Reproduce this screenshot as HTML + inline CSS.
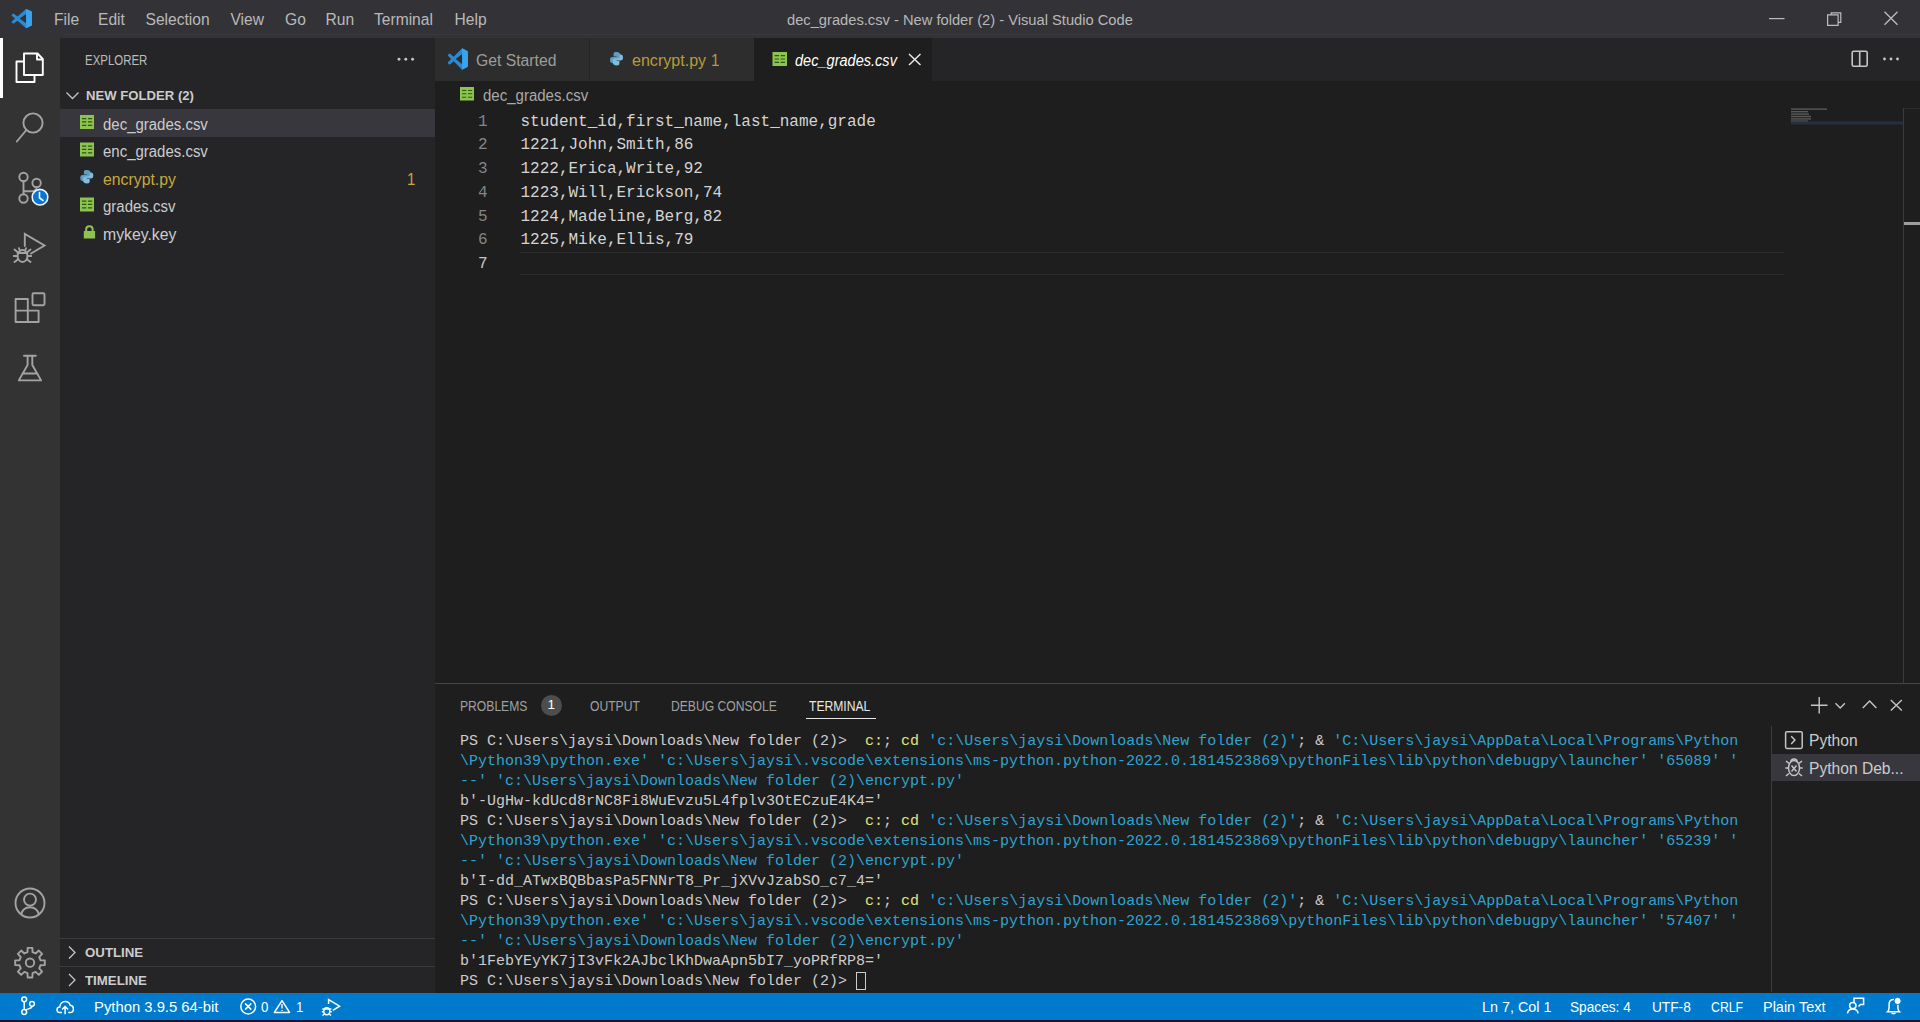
<!DOCTYPE html>
<html><head><meta charset="utf-8">
<style>
*{margin:0;padding:0;box-sizing:border-box}
html,body{width:1920px;height:1022px;overflow:hidden;background:#1e1e1e;font-family:"Liberation Sans",sans-serif;color:#ccc}
.a{position:absolute;white-space:nowrap}
#title{left:0;top:0;width:1920px;height:38px;background:#333337}
#act{left:0;top:38px;width:60px;height:955px;background:#333333}
#side{left:60px;top:38px;width:375px;height:955px;background:#252528}
#tabs{left:435px;top:38px;width:1485px;height:43px;background:#252528}
#editor{left:435px;top:81px;width:1485px;height:602px;background:#1e1e1e}
#panel{left:435px;top:683px;width:1485px;height:310px;background:#1e1e1e;border-top:1px solid #454545}
#status{left:0;top:992.5px;width:1920px;height:27.5px;background:#007acc}
#bottomstrip{left:0;top:1020px;width:1920px;height:2px;background:#1d1030}
.menu{top:11px;font-size:15.6px;line-height:18px;color:#b9b9b9}
.flist{font-size:15.6px;line-height:18px;color:#cccccc;transform:scaleX(0.96);transform-origin:0 0}
.tabt{font-size:15.6px;line-height:18px;transform:scaleX(0.97);transform-origin:0 0}
.ptab{top:697.5px !important;font-size:14.2px;line-height:16px;color:#a0a0a0;transform:scaleX(0.855);transform-origin:0 0}
.sbt{top:998.5px;font-size:14.4px;line-height:17px;color:#ffffff;transform:scaleX(0.92);transform-origin:0 0}
.mono{font-family:"Liberation Mono",monospace}
svg{position:absolute;overflow:visible}
</style></head><body>
<div id="title" class="a"></div>
<div id="act" class="a"></div>
<div id="side" class="a"></div>
<div id="tabs" class="a"></div>
<div id="editor" class="a"></div>
<div id="panel" class="a"></div>
<div id="status" class="a"></div>
<div id="bottomstrip" class="a"></div>
<div class="a" style="left:64px;top:33.5px;width:1856px;height:1.5px;background:#38383d"></div>

<!-- TITLE BAR -->
<svg style="left:0;top:0" width="40" height="38"><g transform="translate(11.4 8.5) scale(0.207 0.202)"><path d="M70.9 2.1 L96 14.2 C97.8 15 99 16.9 99 18.9 V81.1 C99 83.1 97.8 85 96 85.8 L70.9 97.9 L29.6 60.3 L11.7 74 C10.5 74.9 8.9 74.9 7.7 74 L1.9 68.8 C0.6 67.5 0.6 65.5 1.9 64.2 L17.4 50 L1.9 35.8 C0.6 34.5 0.6 32.5 1.9 31.2 L7.7 26 C8.9 25.1 10.5 25.1 11.7 26 L29.6 39.7 Z M70.9 27.2 L39.6 50 L70.9 72.8 Z" fill="#2a8ad4" fill-rule="evenodd"/><path d="M70.9 2.1 L96 14.2 C97.8 15 99 16.9 99 18.9 V81.1 C99 83.1 97.8 85 96 85.8 L70.9 97.9 Z" fill="#3aa3ee"/></g></svg>
<div class="a menu" style="left:54px">File</div>
<div class="a menu" style="left:98px">Edit</div>
<div class="a menu" style="left:145.5px">Selection</div>
<div class="a menu" style="left:230.5px">View</div>
<div class="a menu" style="left:285px">Go</div>
<div class="a menu" style="left:325.5px">Run</div>
<div class="a menu" style="left:374px">Terminal</div>
<div class="a menu" style="left:454.5px">Help</div>
<div class="a menu" style="left:787px;font-size:14.7px;top:11px;color:#b8b8b8">dec_grades.csv - New folder (2) - Visual Studio Code</div>
<svg style="left:1768.5px;top:18px" width="16" height="2"><rect x="0" y="0" width="15.5" height="1.2" fill="#bdbdbd"/></svg>
<svg style="left:1826px;top:10px" width="18" height="18" viewBox="0 0 18 18"><path d="M1.6 4.8 H12.1 V15.3 H1.6 Z M5.2 4.8 V2.8 H14.8 V12.4 H12.1" fill="none" stroke="#bdbdbd" stroke-width="1.2"/></svg>
<svg style="left:1883px;top:10px" width="18" height="18" viewBox="0 0 18 18"><path d="M1.5 1.8 L14.5 14.8 M14.5 1.8 L1.5 14.8" stroke="#bdbdbd" stroke-width="1.3"/></svg>


<!-- ACTIVITY BAR -->
<div class="a" style="left:0;top:38px;width:2.5px;height:60px;background:#ffffff"></div>
<svg style="left:0;top:38px" width="60" height="360" viewBox="0 38 60 360">
 <g fill="none" stroke="#ffffff" stroke-width="1.9" stroke-linejoin="round">
  <path d="M24 61.5 H16.5 V82 H34.5 V75"/>
  <path d="M24 75 V53.5 H37.5 L42.8 59 V75 Z"/>
  <path d="M37 53.5 V59.5 H42.8"/>
 </g>
 <g fill="none" stroke="#a3a3a3" stroke-width="1.9" stroke-linecap="round">
  <circle cx="33" cy="123" r="9.6"/>
  <path d="M26 130.5 L16.8 141.5"/>
  <circle cx="23.5" cy="177" r="4.2"/>
  <circle cx="36.6" cy="183" r="4.2"/>
  <circle cx="23.5" cy="198.5" r="4.2"/>
  <path d="M23.5 181.2 V194.3 M23.5 191.3 H31 C34.5 191.3 36.6 190 36.6 187.2"/>
  <path d="M24.8 246 V234 L44.5 245.5 L31 253.5"/>
  <ellipse cx="22.5" cy="256" rx="5" ry="6"/>
  <path d="M17.5 253 H27.5 M14.5 249.5 L17.5 252 M30.5 249.5 L27.5 252 M13.8 256 H17.5 M27.5 256 H31.2 M14.5 262 L17.8 259.5 M30.5 262 L27.2 259.5 M19.8 250.5 L19 248.2 M25.2 250.5 L26 248.2"/>
  <path d="M15.6 299 H27.8 V322 H15.6 Z M15.6 310.6 H38.6 V322 H27.8" stroke-linejoin="round"/>
  <rect x="32.5" y="293.2" width="12" height="12" rx="1.2"/>
  <path d="M24 355.7 H35.8 M27.6 355.7 V365 L18.8 380.4 H41.1 L32.3 365 V355.7 M22.5 373.5 H37.5" stroke-linejoin="round"/>
 </g>
 <circle cx="40" cy="197.2" r="7.8" fill="#0a74d2" stroke="#e6f6ff" stroke-width="1.6"/>
 <path d="M39.5 192.5 V197.8 L43 200.5" fill="none" stroke="#ffffff" stroke-width="1.6" stroke-linecap="round"/>
</svg>
<svg style="left:0;top:880px" width="60" height="110" viewBox="0 880 60 110">
 <g fill="none" stroke="#a3a3a3" stroke-width="1.9">
  <circle cx="30" cy="903" r="14.5"/>
  <circle cx="30" cy="899.6" r="6"/>
  <path d="M21.2 914.2 C22.5 909.5 26 907.2 30 907.2 C34 907.2 37.5 909.5 38.8 914.2"/>
  <path d="M44.82 960.35 L44.82 965.05 L40.50 965.22 L39.21 968.34 L42.14 971.52 L38.82 974.84 L35.64 971.91 L32.52 973.20 L32.35 977.52 L27.65 977.52 L27.48 973.20 L24.36 971.91 L21.18 974.84 L17.86 971.52 L20.79 968.34 L19.50 965.22 L15.18 965.05 L15.18 960.35 L19.50 960.18 L20.79 957.06 L17.86 953.88 L21.18 950.56 L24.36 953.49 L27.48 952.20 L27.65 947.88 L32.35 947.88 L32.52 952.20 L35.64 953.49 L38.82 950.56 L42.14 953.88 L39.21 957.06 L40.50 960.18 Z" stroke-linejoin="round"/>
  <circle cx="30" cy="962.7" r="4.2"/>
 </g>
</svg>


<!-- SIDEBAR -->
<div class="a" style="left:85px;top:52px;font-size:14px;line-height:16px;color:#bbbbbb;transform:scaleX(0.817);transform-origin:0 0">EXPLORER</div>
<svg style="left:396px;top:57px" width="22" height="5"><circle cx="3" cy="2.2" r="1.45" fill="#c5c5c5"/><circle cx="9.8" cy="2.2" r="1.45" fill="#c5c5c5"/><circle cx="16.6" cy="2.2" r="1.45" fill="#c5c5c5"/></svg>
<svg style="left:60px;top:81px" width="30" height="28"><path d="M6.5 11.5 L12.5 17.5 L18.5 11.5" fill="none" stroke="#c5c5c5" stroke-width="1.3"/></svg>
<div class="a" style="left:85.5px;top:88px;font-size:13px;line-height:16px;font-weight:bold;color:#cccccc;transform:scaleX(1.01);transform-origin:0 0">NEW FOLDER (2)</div>
<div class="a" style="left:60px;top:109px;width:375px;height:27.5px;background:#37373d"></div>
<div class="a flist" style="left:102.5px;top:115.5px">dec_grades.csv</div>
<div class="a flist" style="left:102.5px;top:143.0px">enc_grades.csv</div>
<div class="a flist" style="left:102.5px;top:170.5px;color:#c9a83a;transform:scaleX(1.013)">encrypt.py</div>
<div class="a flist" style="left:407px;top:170.5px;color:#c9a83a">1</div>
<div class="a flist" style="left:102.5px;top:198.0px">grades.csv</div>
<div class="a flist" style="left:102.5px;top:225.5px;transform:scaleX(1.013)">mykey.key</div>
<svg style="left:0;top:0" width="100" height="250">
 <g id="csvicon"><rect x="80" y="115" width="14" height="14" fill="#8dc34f"/>
 <path d="M82 118.6 H86.4 M88 118.6 H92.2 M82 121.9 H86.4 M88 121.9 H92.2 M82 125.4 H86.4 M88 125.4 H92.2" stroke="#2a5a12" stroke-width="1.1"/></g>
 <use href="#csvicon" y="27.5"/>
 <use href="#csvicon" y="82.5"/>
 <g transform="translate(80.3 170)">
  <path d="M6.3 0 C3.5 0 3.6 1.2 3.6 2.6 V4.4 H6.5 V5 H2.2 C0.8 5 0 6.1 0 8 C0 9.9 0.9 10.9 2.2 10.9 H3.3 V9.2 C3.3 7.9 4.3 7 5.5 7 H8.4 C9.4 7 10.2 6.2 10.2 5.2 V2.6 C10.2 1.2 9.1 0 6.3 0 Z" fill="#5a9fc6"/>
  <path d="M6.7 13.4 C9.5 13.4 9.4 12.2 9.4 10.8 V9 H6.5 V8.4 H10.8 C12.2 8.4 13 7.3 13 5.4 C13 3.5 12.1 2.5 10.8 2.5 H9.7 V4.2 C9.7 5.5 8.7 6.4 7.5 6.4 H4.6 C3.6 6.4 2.8 7.2 2.8 8.2 V10.8 C2.8 12.2 3.9 13.4 6.7 13.4 Z" fill="#82bcdc"/>
 </g>
 <path d="M86.2 231.5 V229 C86.2 227.3 87.6 226.2 89.4 226.2 C91.2 226.2 92.6 227.3 92.6 229 V231.5" fill="none" stroke="#8dc34f" stroke-width="2"/>
 <rect x="83.8" y="231" width="11.3" height="7.5" fill="#8dc34f"/>
</svg>
<div class="a" style="left:60px;top:938px;width:375px;height:1px;background:#3c3c3e"></div>
<div class="a" style="left:60px;top:965.5px;width:375px;height:1px;background:#3c3c3e"></div>
<svg style="left:60px;top:939px" width="30" height="54"><path d="M9 7.5 L15 13.5 L9 19.5 M9 35 L15 41 L9 47" fill="none" stroke="#c5c5c5" stroke-width="1.3"/></svg>
<div class="a" style="left:85px;top:945px;font-size:13px;line-height:16px;font-weight:bold;color:#cccccc;transform:scaleX(1.02);transform-origin:0 0">OUTLINE</div>
<div class="a" style="left:85px;top:972.5px;font-size:13px;line-height:16px;font-weight:bold;color:#cccccc;transform:scaleX(1.02);transform-origin:0 0">TIMELINE</div>


<!-- EDITOR TABS -->
<div class="a" style="left:435px;top:38px;width:154px;height:43px;background:#2d2d2d"></div>
<div class="a" style="left:590px;top:38px;width:164px;height:43px;background:#2d2d2d"></div>
<div class="a" style="left:754px;top:38px;width:177.5px;height:43px;background:#1e1e1e"></div>
<svg style="left:0;top:0" width="480" height="80"><g transform="translate(447.6 47.8) scale(0.205 0.225)"><path d="M70.9 2.1 L96 14.2 C97.8 15 99 16.9 99 18.9 V81.1 C99 83.1 97.8 85 96 85.8 L70.9 97.9 L29.6 60.3 L11.7 74 C10.5 74.9 8.9 74.9 7.7 74 L1.9 68.8 C0.6 67.5 0.6 65.5 1.9 64.2 L17.4 50 L1.9 35.8 C0.6 34.5 0.6 32.5 1.9 31.2 L7.7 26 C8.9 25.1 10.5 25.1 11.7 26 L29.6 39.7 Z M70.9 27.2 L39.6 50 L70.9 72.8 Z" fill="#2a8ad4" fill-rule="evenodd"/><path d="M70.9 2.1 L96 14.2 C97.8 15 99 16.9 99 18.9 V81.1 C99 83.1 97.8 85 96 85.8 L70.9 97.9 Z" fill="#3aa3ee"/></g></svg>
<div class="a tabt" style="left:475.5px;top:52px;color:#9d9d9d;transform:scaleX(1.008)">Get Started</div>
<svg style="left:0;top:0" width="800" height="80">
 <g transform="translate(610 52) scale(1.0)">
  <path d="M6.3 0 C3.5 0 3.6 1.2 3.6 2.6 V4.4 H6.5 V5 H2.2 C0.8 5 0 6.1 0 8 C0 9.9 0.9 10.9 2.2 10.9 H3.3 V9.2 C3.3 7.9 4.3 7 5.5 7 H8.4 C9.4 7 10.2 6.2 10.2 5.2 V2.6 C10.2 1.2 9.1 0 6.3 0 Z" fill="#5a9fc6"/>
  <path d="M6.7 13.4 C9.5 13.4 9.4 12.2 9.4 10.8 V9 H6.5 V8.4 H10.8 C12.2 8.4 13 7.3 13 5.4 C13 3.5 12.1 2.5 10.8 2.5 H9.7 V4.2 C9.7 5.5 8.7 6.4 7.5 6.4 H4.6 C3.6 6.4 2.8 7.2 2.8 8.2 V10.8 C2.8 12.2 3.9 13.4 6.7 13.4 Z" fill="#82bcdc"/>
 </g>
 <g id="csv2"><rect x="772.5" y="52" width="14.5" height="14" fill="#8dc34f"/>
 <path d="M774.6 55.6 H779 M780.6 55.6 H785 M774.6 59 H779 M780.6 59 H785 M774.6 62.4 H779 M780.6 62.4 H785" stroke="#2a5a12" stroke-width="1.1"/></g>
 <path d="M909 54 L920.5 65 M920.5 54 L909 65" stroke="#e8e8e8" stroke-width="1.5"/>
</svg>
<div class="a tabt" style="left:632px;top:52px;color:#b89b3a;transform:scaleX(1.03)">encrypt.py</div>
<div class="a tabt" style="left:711px;top:52px;color:#b89b3a">1</div>
<div class="a tabt" style="left:795px;top:52px;color:#ffffff;font-style:italic;transform:scaleX(0.933)">dec_grades.csv</div>

<!-- BREADCRUMB -->
<svg style="left:0;top:0" width="500" height="110">
 <rect x="460" y="87" width="14" height="13.5" fill="#8dc34f"/>
 <path d="M462 90.5 H466.3 M468 90.5 H472.2 M462 93.8 H466.3 M468 93.8 H472.2 M462 97.2 H466.3 M468 97.2 H472.2" stroke="#2a5a12" stroke-width="1.1"/>
</svg>
<div class="a flist" style="left:482.5px;top:87px;color:#a9a9a9;transform:scaleX(0.963)">dec_grades.csv</div>

<!-- EDITOR CONTENT -->
<div class="a" style="left:520px;top:251.5px;width:1264px;height:23px;border-top:1.5px solid #2b2b2b;border-bottom:1.5px solid #2b2b2b"></div>
<div class="a mono" style="left:435px;top:110.5px;width:52.5px;text-align:right;font-size:16px;line-height:23.75px;color:#858585;white-space:pre">1
2
3
4
5
6
<span style="color:#c6c6c6">7</span></div>
<div class="a mono" style="left:520.5px;top:110.5px;font-size:16px;line-height:23.75px;color:#d4d4d4;white-space:pre">student_id,first_name,last_name,grade
1221,John,Smith,86
1222,Erica,Write,92
1223,Will,Erickson,74
1224,Madeline,Berg,82
1225,Mike,Ellis,79
</div>
<!-- minimap -->
<svg style="left:1788px;top:106px" width="120" height="22">
 <g fill="#8a8a8a" opacity="0.55">
  <rect x="3" y="2.4" width="36" height="1.4"/>
  <rect x="3" y="5" width="17" height="1.4"/>
  <rect x="3" y="7.4" width="18" height="1.4"/>
  <rect x="3" y="9.8" width="20" height="1.4"/>
  <rect x="3" y="12.2" width="20" height="1.4"/>
  <rect x="3" y="14.4" width="17" height="1.4"/>
 </g>
 <rect x="3" y="15.5" width="112" height="3" fill="#25323d"/>
</svg>
<div class="a" style="left:1903px;top:108px;width:1px;height:575px;background:#3a3a3a"></div>
<div class="a" style="left:1904px;top:108px;width:16px;height:1px;background:#2e2e2e"></div>
<div class="a" style="left:1904px;top:221.5px;width:16px;height:3px;background:#9d9d9d"></div>
<!-- editor actions -->
<svg style="left:1850px;top:49px" width="60" height="22">
 <rect x="2.2" y="2.2" width="15" height="15" rx="1.5" fill="none" stroke="#c5c5c5" stroke-width="1.6"/>
 <path d="M9.7 2.2 V17.2" stroke="#c5c5c5" stroke-width="1.6"/>
 <circle cx="34.5" cy="10" r="1.4" fill="#c5c5c5"/><circle cx="41" cy="10" r="1.4" fill="#c5c5c5"/><circle cx="47.5" cy="10" r="1.4" fill="#c5c5c5"/>
</svg>


<!-- PANEL -->
<div class="a ptab" style="left:460px;top:697px">PROBLEMS</div>
<div class="a" style="left:540.5px;top:694.5px;width:21.5px;height:21.5px;border-radius:50%;background:#4d4d4d"></div>
<div class="a" style="left:540.5px;top:697px;width:21.5px;text-align:center;font-size:13.5px;line-height:16px;color:#ffffff">1</div>
<div class="a ptab" style="left:589.5px;top:697px">OUTPUT</div>
<div class="a ptab" style="left:671px;top:697px">DEBUG CONSOLE</div>
<div class="a ptab" style="left:808.5px;top:697px;color:#e7e7e7">TERMINAL</div>
<div class="a" style="left:806px;top:717.5px;width:69.5px;height:1.2px;background:#e7e7e7"></div>
<svg style="left:1800px;top:690px" width="120" height="30">
 <g fill="none" stroke="#c5c5c5" stroke-width="1.4">
  <path d="M19.2 6.9 V23.5 M10.9 15.2 H27.5"/>
  <path d="M35.5 13.3 L40.2 18 L44.9 13.3"/>
  <path d="M62.8 18 L69.6 11 L76.4 18"/>
  <path d="M90.8 9.9 L101.8 20.6 M101.8 9.9 L90.8 20.6"/>
 </g>
</svg>
<div class="a mono" style="left:460px;top:731.5px;font-size:15px;line-height:20px;color:#cccccc;white-space:pre">PS C:\Users\jaysi\Downloads\New folder (2)&gt;  <span style="color:#e2e27a">c:</span>; <span style="color:#e2e27a">cd</span> <span style="color:#2fa3cf">'c:\Users\jaysi\Downloads\New folder (2)'</span>; &amp; <span style="color:#2fa3cf">'C:\Users\jaysi\AppData\Local\Programs\Python</span>
<span style="color:#2fa3cf">\Python39\python.exe' 'c:\Users\jaysi\.vscode\extensions\ms-python.python-2022.0.1814523869\pythonFiles\lib\python\debugpy\launcher' '65089' '</span>
<span style="color:#2fa3cf">--' 'c:\Users\jaysi\Downloads\New folder (2)\encrypt.py'</span>
b'-UgHw-kdUcd8rNC8Fi8WuEvzu5L4fplv3OtECzuE4K4='
PS C:\Users\jaysi\Downloads\New folder (2)&gt;  <span style="color:#e2e27a">c:</span>; <span style="color:#e2e27a">cd</span> <span style="color:#2fa3cf">'c:\Users\jaysi\Downloads\New folder (2)'</span>; &amp; <span style="color:#2fa3cf">'C:\Users\jaysi\AppData\Local\Programs\Python</span>
<span style="color:#2fa3cf">\Python39\python.exe' 'c:\Users\jaysi\.vscode\extensions\ms-python.python-2022.0.1814523869\pythonFiles\lib\python\debugpy\launcher' '65239' '</span>
<span style="color:#2fa3cf">--' 'c:\Users\jaysi\Downloads\New folder (2)\encrypt.py'</span>
b'I-dd_ATwxBQBbasPa5FNNrT8_Pr_jXVvJzabSO_c7_4='
PS C:\Users\jaysi\Downloads\New folder (2)&gt;  <span style="color:#e2e27a">c:</span>; <span style="color:#e2e27a">cd</span> <span style="color:#2fa3cf">'c:\Users\jaysi\Downloads\New folder (2)'</span>; &amp; <span style="color:#2fa3cf">'C:\Users\jaysi\AppData\Local\Programs\Python</span>
<span style="color:#2fa3cf">\Python39\python.exe' 'c:\Users\jaysi\.vscode\extensions\ms-python.python-2022.0.1814523869\pythonFiles\lib\python\debugpy\launcher' '57407' '</span>
<span style="color:#2fa3cf">--' 'c:\Users\jaysi\Downloads\New folder (2)\encrypt.py'</span>
b'1FebYEyYK7jI3vFk2AJbclKhDwaApn5bI7_yoPRfRP8='
PS C:\Users\jaysi\Downloads\New folder (2)&gt; </div>
<div class="a" style="left:856px;top:971.5px;width:9.5px;height:18px;border:1px solid #cccccc"></div>
<!-- terminal tabs -->
<div class="a" style="left:1770.5px;top:726px;width:1px;height:266px;background:#3c3c3c"></div>
<div class="a" style="left:1771.5px;top:754px;width:148.5px;height:27px;background:#37373d"></div>
<svg style="left:1780px;top:728px" width="30" height="55">
 <g fill="none" stroke="#c5c5c5" stroke-width="1.5">
  <rect x="5.6" y="3.8" width="16.6" height="16.6" rx="1.3"/>
  <path d="M11.2 8.3 L14.9 12.1 L11.2 15.9"/>
  <ellipse cx="14" cy="40" rx="5.5" ry="7.6"/>
  <path d="M10.9 34 C10.9 30 17.1 30 17.1 34" />
  <path d="M11.5 37.5 L16.5 43.5 M16.5 37.5 L11.5 43.5"/>
  <path d="M5.3 40 H8.5 M19.5 40 H22.7 M6 33 L9 35.3 M22 33 L19 35.3 M6 48 L9 45.5 M22 48 L19 45.5"/>
 </g>
</svg>
<div class="a" style="left:1809px;top:732px;font-size:15.6px;line-height:18px;color:#cccccc;transform:scaleX(1.0);transform-origin:0 0">Python</div>
<div class="a" style="left:1809px;top:760px;font-size:15.6px;line-height:18px;color:#cccccc;transform:scaleX(1.0);transform-origin:0 0">Python Deb...</div>

<!-- STATUS BAR -->
<svg style="left:0;top:992px" width="360" height="28">
 <g fill="none" stroke="#ffffff" stroke-width="1.5">
  <circle cx="24.2" cy="7.3" r="2.4"/>
  <circle cx="32" cy="11.8" r="2.4"/>
  <circle cx="24.2" cy="20" r="2.4"/>
  <path d="M24.2 9.7 V17.6 M32 14.2 C32 17 27 16.5 25.5 18.2"/>
  <path d="M62 20.5 H59.5 C57.9 20.5 57 19.2 57 17.8 C57 16.2 58.3 15 59.8 15 C60 11.7 62.4 9.5 65.2 9.5 C67.6 9.5 69.6 11.1 70.2 13.3 C72 13.5 73.4 14.9 73.4 16.9 C73.4 18.9 72 20.5 70 20.5 H68.2"/>
  <path d="M65.1 22.3 V14.7 M62.1 17.5 L65.1 14.5 L68.1 17.5"/>
  <circle cx="248.2" cy="14.5" r="7.4"/>
  <path d="M245.1 11.4 L251.3 17.6 M251.3 11.4 L245.1 17.6"/>
  <path d="M282 8.7 L289.6 20.4 H274.4 Z" stroke-linejoin="round"/>
  <path d="M328.6 12 V7.6 L339.6 14.2 L332.8 18.4"/>
  <ellipse cx="326.8" cy="19.2" rx="3" ry="3.5"/>
  <path d="M322.3 17 H331.3 M321.8 19.8 H323.6 M330 19.8 H331.8 M322.5 23.5 L324 22.2 M331 23.5 L329.5 22.2"/>
 </g>
 <path d="M282 12 V16.6 M282 18 V19" stroke="#ffffff" stroke-width="1.3"/>
</svg>
<div class="a sbt" style="left:94px;transform:scaleX(1.03)">Python 3.9.5 64-bit</div>
<div class="a sbt" style="left:260.5px">0</div>
<div class="a sbt" style="left:295.5px">1</div>
<div class="a sbt" style="left:1481.5px;transform:scaleX(0.997)">Ln 7, Col 1</div>
<div class="a sbt" style="left:1570px;transform:scaleX(0.95)">Spaces: 4</div>
<div class="a sbt" style="left:1652px;transform:scaleX(0.95)">UTF-8</div>
<div class="a sbt" style="left:1711px;transform:scaleX(0.854)">CRLF</div>
<div class="a sbt" style="left:1763px;transform:scaleX(1.005)">Plain Text</div>
<svg style="left:1840px;top:992px" width="80" height="28">
 <g fill="none" stroke="#ffffff" stroke-width="1.5">
  <path d="M14 10.5 V6.3 H23.6 V12.4 H20.5 L18.5 14.5"/>
  <circle cx="12.8" cy="13.6" r="3.2"/>
  <path d="M7.5 21.3 C8 18.5 10 17 12.8 17 C15.6 17 17.6 18.5 18.1 21.3"/>
  <path d="M47.5 19.8 H59.5 C58.2 18.5 57.9 17.6 57.9 15.5 V12.5 C57.9 10 56.5 7.5 53.5 7.5 C50.5 7.5 49.1 10 49.1 12.5 V15.5 C49.1 17.6 48.8 18.5 47.5 19.8 Z"/>
  <path d="M51.8 20.5 C51.8 22.2 55.2 22.2 55.2 20.5"/>
 </g>
 <circle cx="57.6" cy="9" r="3.6" fill="#ffffff" stroke="#007acc" stroke-width="1"/>
</svg>

</body></html>
